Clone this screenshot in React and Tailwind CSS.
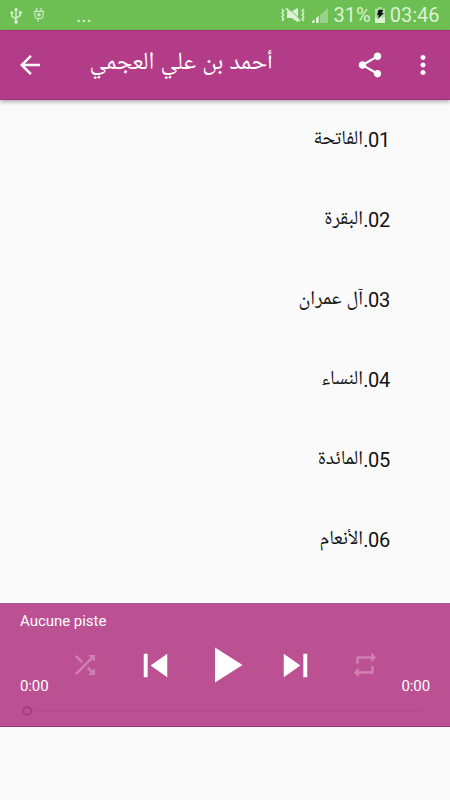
import {
  MdArrowBack,
  MdMoreVert,
  MdPlayArrow,
  MdRepeat,
  MdShare,
  MdShuffle,
  MdSkipNext,
  MdSkipPrevious,
} from 'react-icons/md';

const tracks = [
  { number: '01', name: 'الفاتحة' },
  { number: '02', name: 'البقرة' },
  { number: '03', name: 'آل عمران' },
  { number: '04', name: 'النساء' },
  { number: '05', name: 'المائدة' },
  { number: '06', name: 'الأنعام' },
];

const UsbIcon = () => (
  <svg width="12" height="17" viewBox="0 0 12 17">
    <path d="M6 2v13M1.8 6v3.2L6 12M10.2 5.5v3L6 11" fill="none" stroke="currentColor" strokeWidth="1.4" />
    <path d="M6 0l2.2 3.5H3.8z" fill="currentColor" />
    <circle cx="6" cy="15" r="1.8" fill="currentColor" />
    <circle cx="1.8" cy="5.8" r="1.5" fill="currentColor" />
    <path d="M8.9 4.3h2.8V7H8.9z" fill="currentColor" />
  </svg>
);

const PlugIcon = () => (
  <svg width="12" height="16" viewBox="0 0 12 16" fill="none" stroke="currentColor" strokeWidth="1.2">
    <path d="M3.7 1v3M8 1v3M0.8 4.4h10.4M1.9 4.4v4c0 2 1.6 3.2 4.1 3.2s4.1-1.2 4.1-3.2v-4M4.9 11.5v3.2" opacity="0.85" />
    <path d="M6 5.8v4M4 7.8h4" />
  </svg>
);

const MutedIcon = () => (
  <svg width="24" height="16" viewBox="0 0 24 16">
    <path d="M6 4.5h4.5L17 0.8v14.4L10.5 11H6z" fill="currentColor" />
    <path d="M7 1.2L20 12.8" stroke="#6dbf53" strokeWidth="1" />
    <path d="M5 1.4L19 14" stroke="currentColor" strokeWidth="1.8" />
    <path
      d="M1 2l1.6 2L1 6l1.6 2L1 10l1.6 2L1 14M22.8 2l-1.6 2 1.6 2-1.6 2 1.6 2-1.6 2 1.6 2"
      stroke="currentColor"
      strokeWidth="1.4"
      fill="none"
    />
  </svg>
);

const SignalIcon = () => (
  <svg width="16" height="15" viewBox="0 0 16 15">
    <path d="M0 15v-1.5l2.5-2.3V15zM4 15v-4.8L6.8 7.6V15z" fill="currentColor" />
    <path d="M8 15V7.2L16 0v15z" fill="currentColor" opacity="0.4" />
  </svg>
);

const BatteryIcon = () => (
  <svg width="10" height="16" viewBox="0 0 10 16">
    <path d="M3 0h4v1.5h3V16H0V1.5h3z" fill="currentColor" opacity="0.6" />
    <path d="M0 10.5h10V16H0z" fill="currentColor" />
    <path d="M3.6 2.8h4.6L6.8 6H9L2.4 12.2 4 8.2H2z" fill="#111" />
  </svg>
);

const StatusBar = () => (
  <div className="flex h-[30px] items-center bg-[#6dbf53] text-[20px] text-[#dcf1d5]">
    <span className="ml-[10px]">
      <UsbIcon />
    </span>
    <span className="ml-[11px]">
      <PlugIcon />
    </span>
    <span className="ml-[31px] leading-[30px]">...</span>
    <div className="ml-auto flex items-center pr-[10.5px]">
      <MutedIcon />
      <span className="ml-[7px]">
        <SignalIcon />
      </span>
      <span className="ml-[6px] pt-px leading-[33px]">31%</span>
      <span className="ml-[4px]">
        <BatteryIcon />
      </span>
      <span className="ml-[5px] pt-px leading-[33px]">03:46</span>
    </div>
  </div>
);

const Header = () => (
  <header className="z-10 flex h-[70px] items-center border-y border-t-[#a42d7b] border-b-[#a42d7b] bg-[#b33c89] pl-[14.5px] pr-[12.5px] text-white shadow-[0_2px_4px_rgba(0,0,0,0.3)]">
    <MdArrowBack className="size-[30px]" />
    <h1 dir="rtl" className="ml-[45px] w-[183.5px] whitespace-nowrap pb-[2px] text-[24.7px]">
      أحمد بن علي العجمي
    </h1>
    <MdShare className="ml-auto size-[30px]" />
    <MdMoreVert className="ml-[22.5px] size-[30px]" />
  </header>
);

const Player = () => (
  <div className="h-[124px] border-y border-t-[#a9568d] border-b-[#9b3173] bg-[#bb5093] px-5 text-[15px] text-white">
    <div className="flex h-[34px] items-center tracking-[-0.03px]">Aucune piste</div>
    <div className="flex h-[54px] items-center px-[50px]">
      <MdShuffle className="size-[30px] text-[#cf80b0]" />
      <div className="flex flex-1 items-center justify-center gap-[16.5px]">
        <MdSkipPrevious className="size-[47px]" />
        <MdPlayArrow className="size-[60px]" />
        <MdSkipNext className="size-[47px]" />
      </div>
      <MdRepeat className="size-[30px] text-[#cf80b0]" />
    </div>
    <div className="-mt-[16px] flex justify-between leading-[20px] tracking-[-0.1px]">
      <span>0:00</span>
      <span>0:00</span>
    </div>
    <div className="mt-[10px] flex items-center pl-[2px] pr-[7px]">
      <span className="size-[10px] rounded-full border-2 border-[#a53f80]" />
      <span className="ml-[2px] h-px flex-1 bg-[#b54b8d]" />
    </div>
  </div>
);

const App = () => {
  return (
    <div className="flex h-[800px] w-[450px] flex-col overflow-hidden bg-[#fafafa] font-['Roboto','Noto_Naskh_Arabic_UI','Noto_Naskh_Arabic','Noto_Sans_Arabic','DejaVu_Sans',sans-serif]">
      <StatusBar />
      <Header />
      <ul className="h-[503px] text-[20px] text-[#111]">
        {tracks.map((track) => (
          <li key={track.number} dir="rtl" className="flex h-20 items-center pr-[60px]">
            <span className="tracking-[-0.3px]">{track.number}.</span>
            <span className="whitespace-nowrap">{track.name}</span>
          </li>
        ))}
      </ul>
      <Player />
    </div>
  );
};

export default App;
